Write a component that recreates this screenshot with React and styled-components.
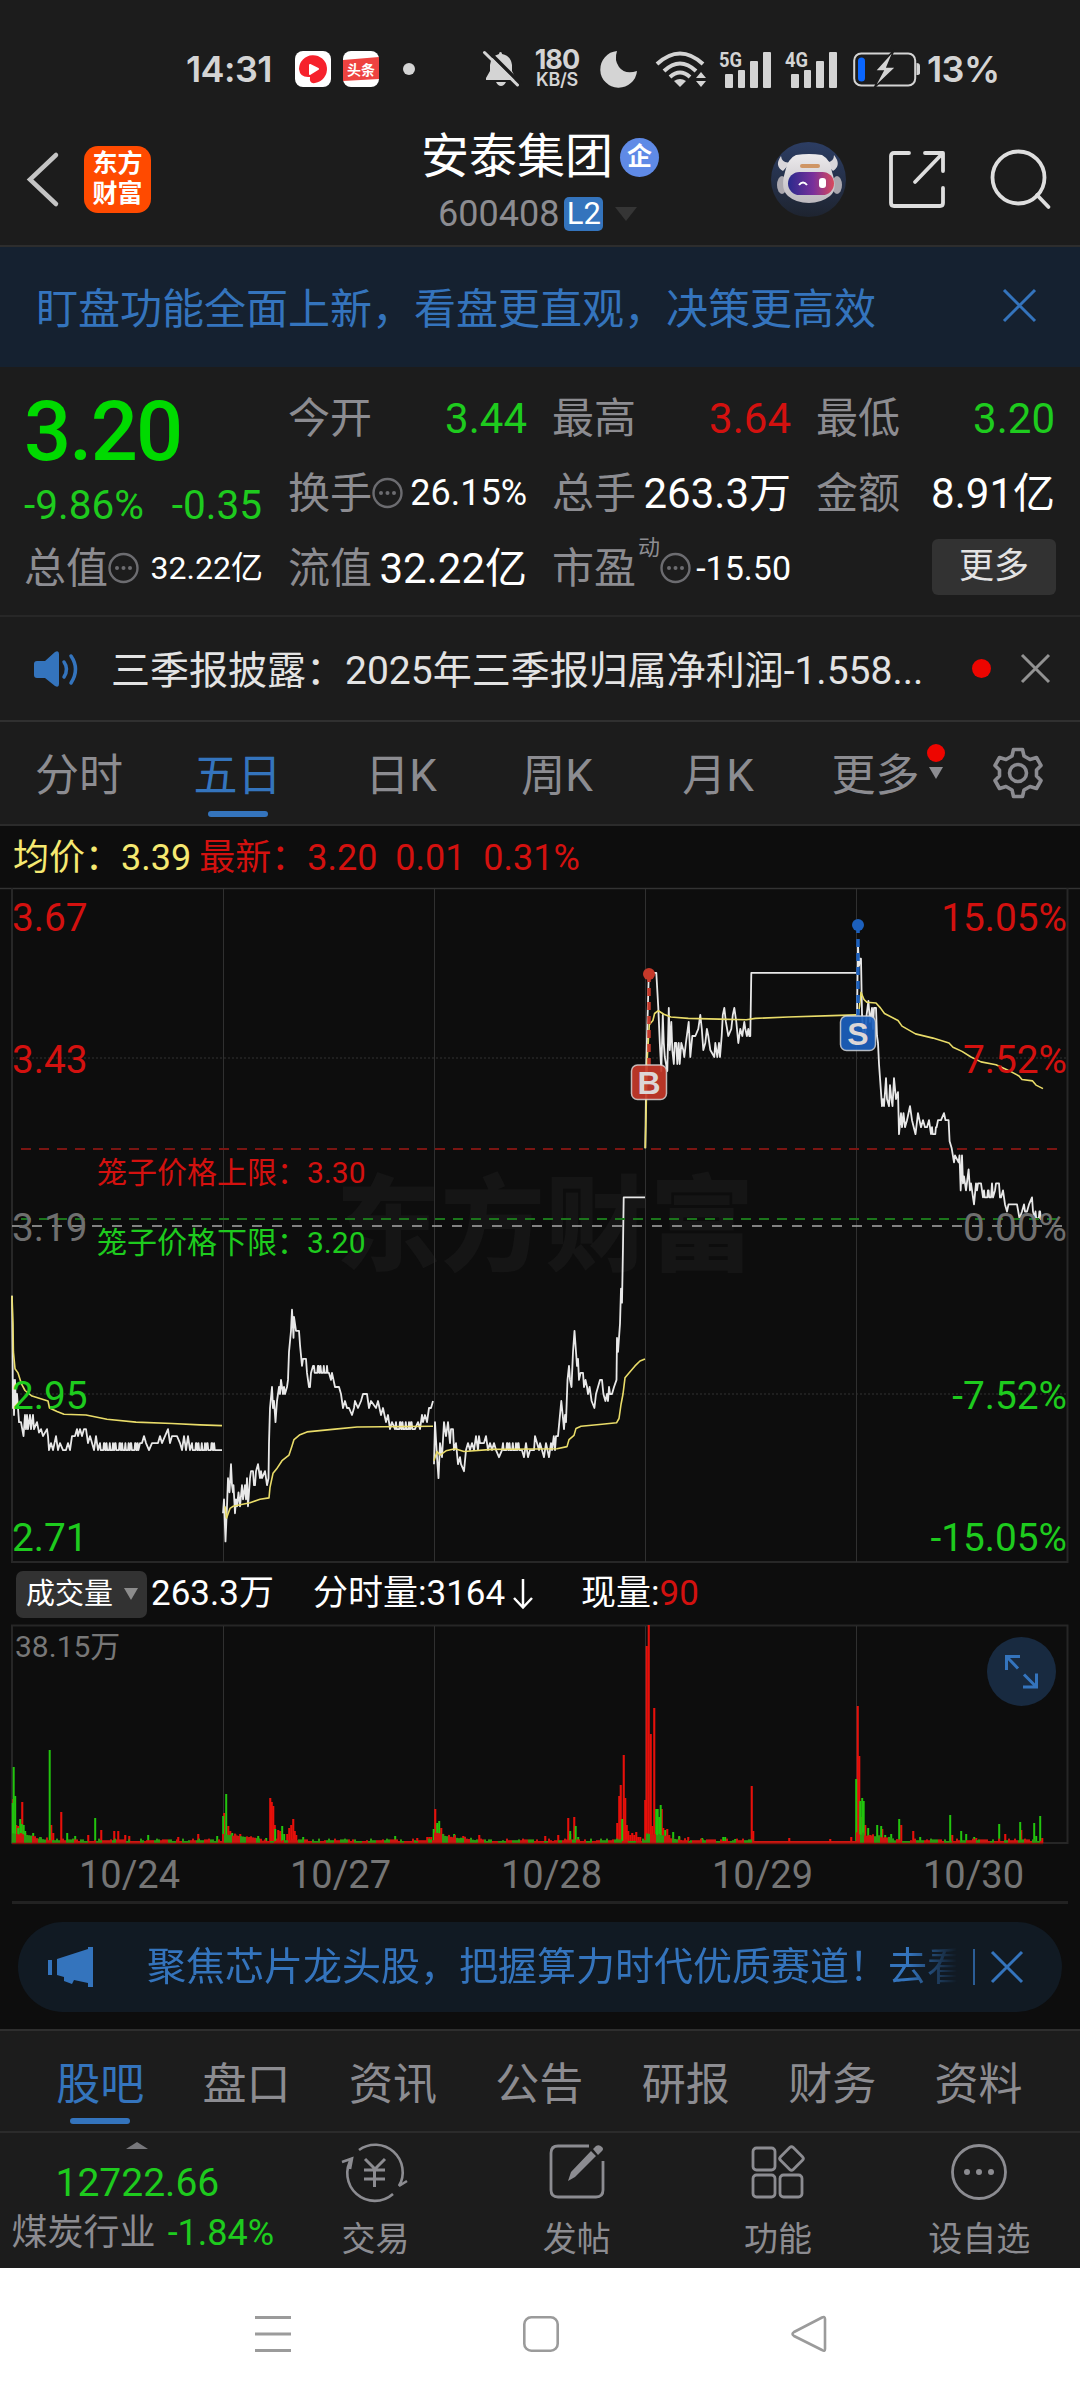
import React from 'react'
import styled, { createGlobalStyle } from 'styled-components'

const GlobalStyle = createGlobalStyle`
	* {
		box-sizing: border-box;
	}
	body {
		margin: 0;
		background: #1c1c1c;
		font-family: Roboto, 'Noto Sans CJK SC', sans-serif;
		color: #e6e6e6;
	}
	svg {
		display: block;
		flex: none;
		overflow: visible;
	}
`

const RED = '#d3110f'
const GREEN = '#1ecb1e'
const BLUE = '#3474bd'
const GREY = '#8c8c91'

const Page = styled.main`
	width: 1080px;
	height: 2400px;
	display: flex;
	flex-direction: column;
	overflow: hidden;
	white-space: nowrap;
`

/* status bar */

const StatusBar = styled.div`
	height: 138px;
	display: flex;
	align-items: center;
	padding-left: 186px;
	color: #d4d4d4;
`

const Slot = styled.div`
	width: ${p => p.$w}px;
	margin: ${p => p.$top || 0}px ${p => p.$gap || 0}px 0 ${p => p.$left || 0}px;
	flex: none;
`

const Clock = styled.span`
	font: 600 36px/40px Inter, sans-serif;
	letter-spacing: -0.6px;
`

const Speed = styled.div`
	display: flex;
	flex-direction: column;
	align-items: center;
	font: 700 27px/22px Inter, sans-serif;
	letter-spacing: -0.9px;

	small {
		font-size: 18px;
		line-height: 18px;
		letter-spacing: -0.3px;
		font-weight: 600;
	}
`

/* header */

const Header = styled.header`
	height: 109px;
	display: flex;
	align-items: flex-start;
	padding-left: 26px;
	border-bottom: 2px solid #2d2d2d;
`

const Logo = styled.div`
	width: 67px;
	height: 67px;
	margin: 8px 0 0 25px;
	padding-top: 3px;
	border-radius: 14px;
	background: #ff4a00;
	color: #fff;
	text-align: center;
	font-weight: 700;
	font-size: 25px;
	line-height: 30px;
	white-space: normal;
`

const Title = styled.div`
	width: 300px;
	margin-left: 240px;
	padding-left: 30px;
`

const NameRow = styled.div`
	height: 56px;
	margin-top: -9px;
	display: flex;
	align-items: center;
	gap: 7px;
	font-size: 48px;
	line-height: 56px;
	color: #fff;
`

const CompanyBadge = styled.span`
	width: 39px;
	height: 39px;
	border-radius: 50%;
	background: #5f8ae6;
	font-size: 25px;
	font-weight: 700;
	line-height: 38px;
	text-align: center;
`

const CodeRow = styled.div`
	height: 36px;
	margin-top: 11px;
	padding-left: 17px;
	display: flex;
	align-items: center;
	font-size: 36px;
	color: ${GREY};
`

const LevelBadge = styled.span`
	width: 39px;
	height: 34px;
	margin: 0 12px 0 5px;
	border-radius: 5px;
	background: ${BLUE};
	color: #fff;
	font-size: 31px;
	line-height: 34px;
	text-align: center;
`

const Arrow = styled.i`
	width: 0;
	height: 0;
	border: ${p => p.$half}px solid transparent;
	border-bottom-width: 0;
	border-top: ${p => p.$h}px solid ${p => p.$color};
`

/* banner and stats */

const Banner = styled.div`
	height: 120px;
	display: flex;
	align-items: center;
	justify-content: space-between;
	padding: 0 44px 3px 36px;
	background: #152130;
	color: ${BLUE};
	font-size: 42px;
`

const Stats = styled.section`
	height: 250px;
	padding: 14px 0 0 24px;
	display: grid;
	grid-template-columns: repeat(4, 238px);
	grid-template-rows: repeat(3, 75px);
	column-gap: 26px;
	border-bottom: 2px solid #272727;
`

const Quote = styled.div`
	grid-row: span 2;
	margin-top: 13px;
	color: ${GREEN};
`

const Price = styled.div`
	font-size: 83px;
	line-height: 75px;
	font-weight: 500;
	letter-spacing: -1.8px;
	color: #00da00;
`

const Change = styled.div`
	display: flex;
	justify-content: space-between;
	font-size: 40.5px;
	line-height: 73px;
`

const Stat = styled.div`
	display: flex;
	align-items: center;
	justify-content: space-between;
	color: ${GREY};
	font-size: 42px;
	line-height: 75px;
`

const StatLabel = styled.span`
	display: flex;
	align-items: center;

	sup {
		align-self: flex-start;
		margin-left: 2px;
		font-size: 22px;
		line-height: 34px;
	}
`

const StatValue = styled.span`
	margin-right: -1px;
	font-size: ${p => p.$size || 42}px;
	color: ${p => p.$color || '#fff'};
`

const MoreButton = styled.button`
	width: 124px;
	height: 56px;
	margin: 8px 0 0 116px;
	padding: 0;
	border: 0;
	border-radius: 6px;
	background: #323232;
	color: #e3e3e3;
	font: 35px/54px Roboto, 'Noto Sans CJK SC', sans-serif;
`

const News = styled.div`
	height: 105px;
	display: flex;
	align-items: center;
	padding-left: 33px;
	border-bottom: 2px solid #303030;
	font-size: 39px;
	color: #e3e3e3;
`

const NewsText = styled.span`
	width: 861px;
	margin-left: 32px;
	padding-bottom: 4px;
`

const Dot = styled.i`
	width: ${p => p.$size}px;
	height: ${p => p.$size}px;
	border-radius: 50%;
	background: ${p => p.$color};
`

/* tabs */

const Tabs = styled.nav`
	height: 104px;
	padding-left: ${p => p.$pad || 0}px;
	display: flex;
	border-top: ${p => (p.$topLine ? '2px solid #2e2e2e' : 0)};
	border-bottom: 2px solid #2b2b2b;
`

const Tab = styled.div`
	position: relative;
	width: ${p => p.$w}px;
	text-align: center;
	font-size: 44px;
	line-height: 108px;
	color: ${p => (p.$active ? BLUE : GREY)};

	&::after {
		content: '';
		display: ${p => (p.$active ? 'block' : 'none')};
		position: absolute;
		left: calc(50% - 30px);
		bottom: 7px;
		width: 60px;
		height: 6px;
		border-radius: 3px;
		background: ${BLUE};
	}
`

const TabMark = styled.span`
	position: absolute;
	left: 120px;
	top: 22px;
	display: flex;
	flex-direction: column;
	align-items: center;
	gap: 5px;
`

const GearBox = styled.div`
	margin: 25px 0 0 48px;
`

/* chart */

const ChartPanel = styled.section`
	height: 1203px;
	background: #0d0d0d;
`

const Summary = styled.div`
	height: 62px;
	padding-left: 13px;
	display: flex;
	gap: 8px;
	font-size: 36px;
	line-height: 64px;
	color: ${p => p.$color};
	white-space: pre;
`

const Tint = styled.span`
	color: ${p => p.$color};
`

const VolumeBar = styled.div`
	height: 62px;
	display: flex;
	align-items: center;
	padding-left: 16px;
	font-size: 35px;
	line-height: 60px;
	color: #fff;
`

const VolumePill = styled.div`
	width: 131px;
	height: 47px;
	margin-right: 4px;
	padding-left: 10px;
	display: flex;
	align-items: center;
	gap: 11px;
	border-radius: 7px;
	background: #323232;
	font-size: 29px;
	line-height: 46px;
`

const VolumeItem = styled.span`
	width: ${p => p.$w}px;
	display: flex;
	align-items: center;
	gap: 6px;
`

const Dates = styled.div`
	height: 59px;
	margin: 0 12px;
	padding-left: 12px;
	display: grid;
	grid-template-columns: repeat(5, 211px);
	border-bottom: 3px solid #222;
	font-size: 38px;
	line-height: 60px;
	text-align: center;
	color: #757575;
`

const Promo = styled.div`
	height: 90px;
	margin: 18px 18px 0;
	padding-left: 30px;
	display: flex;
	align-items: center;
	border-radius: 45px;
	background: #111a23;
	color: ${BLUE};
	font-size: 39px;
	line-height: 88px;
`

const PromoText = styled.span`
	width: 810px;
	margin-left: 52px;
	overflow: hidden;
	mask-image: linear-gradient(90deg, #000 94%, transparent 100%);
`

const Divider = styled.i`
	width: 2px;
	height: 36px;
	margin: 0 16px 0 16px;
	background: #2b5d96;
`

/* bottom */

const Toolbar = styled.footer`
	height: 135px;
	display: flex;
	color: ${GREY};
`

const Sector = styled.div`
	width: 275px;
	display: flex;
	flex-direction: column;
	align-items: center;
	padding-top: 9px;
`

const SectorIndex = styled.div`
	margin-top: 9px;
	font-size: 39px;
	line-height: 50px;
	color: ${GREEN};
`

const SectorRow = styled.div`
	display: flex;
	gap: 12px;
	margin-left: 11px;
	font-size: 36px;
	line-height: 50px;
`

const ToolItem = styled.div`
	width: 201.5px;
	padding-top: 10px;
	display: flex;
	flex-direction: column;
	align-items: center;
	gap: 18px;
	font-size: 34px;
	line-height: 40px;
`

const SystemNav = styled.div`
	flex: 1;
	display: flex;
	justify-content: center;
	gap: 232px;
	padding: 48px 0 0 1px;
	background: #fff;
`

/* icons */

const Cross = ({ size, color, width = 3 }) => (
	<svg width={size} height={size} viewBox={`0 0 ${size} ${size}`} stroke={color} strokeWidth={width}>
		<path d={`M1 1L${size - 1} ${size - 1}M${size - 1} 1L1 ${size - 1}`} />
	</svg>
)

const Signal = ({ label }) => (
	<svg width="54" height="38" viewBox="0 0 54 38" fill="#d4d4d4">
		<text x="0" y="16.5" fontSize="21" fontWeight="700" fontFamily="Roboto" textLength="23" lengthAdjust="spacingAndGlyphs">
			{label}
		</text>
		<rect x="6" y="24" width="8" height="14" rx="1" />
		<rect x="19" y="20" width="7" height="18" rx="1" />
		<rect x="31" y="11" width="8" height="27" rx="1" />
		<rect x="44" y="2" width="8" height="36" rx="1" />
	</svg>
)

const InfoMark = () => (
	<svg width="31" height="31" viewBox="0 0 31 31" fill="#6c6c70">
		<circle cx="15.5" cy="15" r="14" fill="none" stroke="#6c6c70" strokeWidth="2.4" />
		<circle cx="9" cy="15" r="2" />
		<circle cx="15.5" cy="15" r="2" />
		<circle cx="22" cy="15" r="2" />
	</svg>
)

const Robot = () => (
	<svg width="75" height="75" viewBox="0 0 75 75">
		<defs>
			<linearGradient id="sky" x2="0" y2="1">
				<stop stopColor="#2c3d63" />
				<stop offset="1" stopColor="#1e2430" />
			</linearGradient>
			<linearGradient id="visor">
				<stop stopColor="#2a2a8c" />
				<stop offset="0.55" stopColor="#79309b" />
				<stop offset="1" stopColor="#d84a5c" />
			</linearGradient>
			<linearGradient id="shell" x2="0" y2="1">
				<stop stopColor="#eceaec" />
				<stop offset="1" stopColor="#bdb9bf" />
			</linearGradient>
		</defs>
		<circle cx="37.5" cy="37.5" r="37.5" fill="url(#sky)" />
		<path d="M10 14Q3 24 12 29L20 20Q11 22 10 14ZM63 13Q71 23 62 29L54 20Q63 21 63 13Z" fill="#d9d6da" />
		<ellipse cx="11" cy="43" rx="5" ry="9" fill="#aaa7ae" />
		<ellipse cx="66" cy="43" rx="5" ry="9" fill="#aaa7ae" />
		<path d="M25 13Q38 11 51 13Q60 18 61 30Q67 48 59 54Q50 61 38 61Q25 61 17 54Q9 47 14 30Q17 16 25 13Z" fill="url(#shell)" />
		<rect x="17" y="30" width="46" height="23" rx="11.5" fill="url(#visor)" />
		<rect x="29" y="22" width="20" height="4" rx="2" fill="#cf9565" />
		<path d="M28 43Q32 38 36 43" fill="none" stroke="#fff" strokeWidth="2" />
		<rect x="48" y="36" width="7" height="10" rx="3" fill="#fff" />
	</svg>
)

/* x is an offset in the day, price is in cents */
const chop = (from, to, low, high) => {
	const out = []
	for (let x = from, i = 0; x <= to; x += 1.3, i++) {
		out.push([x, (i * 7 + (i >> 2)) % 3 === 0 ? high : low])
		out.push([x + 0.7, i % 4 === 3 ? high : low])
	}
	return out
}

const pts = text => text.split(' ').map(p => p.split(':').map(Number))

const DAYS = [12, 223, 434, 645.3, 857]

const PRICES = [
	[
		...pts('0:309 0.6:300 1:293 1.5:297 2:292 3:297 4:293 5:295 6:293 7:291 9:291 11.5:289 13:292 14:290 15:292 16:290 18:292 19:290 21:292 22:290 25:291 27:289.5 29:290 31:289 35:290 36:289 37:287 39:288 41:287 44:289 46:287 48:288 51:287 54:287 56:288 58:287 60:289 63:289 65:290 66:289 68:290 70:289 72:290 74:290 76:288 78:289 80:288 82:287 84:289 86:287'),
		...chop(88, 126, 287, 288),
		...pts('128:288 130:288 132:289 134:288 137:287 140:288 146:288 148:289 150:288 153:289 156:290 158:288 160:289 165:289 168:288 170:287 172:289 174:287 176:289 178:287'),
		...chop(180, 204, 287, 288),
		...pts('206:287 210:287')
	],
	[
		...pts('0:278 1:280 2.5:274 4:279 5:283 6.5:281 8:285 9:282 10:281 10.5:282 12:278 13:280 14:279 15.5:281 17:279 19:282 20:280 21:281 22:282 23:280 24:283 25:279 27:283 28:284 30:284 31:282 32:282 33:284 35:285 37:283 38:284 39:283 42:284 44:282 45.5:283 46:288 47:293 49:296 50:293 51:294 52.5:291 54:294 56:296 57:295 58:297 60:295 61:296 62:295 64:296 65:297 66:301 68:304 69:307 70.5:303 71:306 73:304 76:304 77:302 79:299 80:300 83:300 84:298 86:296 87:296 88:298 90:299'),
		...chop(91, 104, 298, 299),
		...pts('106:298 108:297 109:298 112:296 116:296 118:295 120:293 122:294 124:293 126:293 129:292 131:293 132:294 135:293 138:294 140:295 144:295 146:293 148:294 153:293 155:294 158:292 160:293 163:291 165:292 167:290 169:291 172:290'),
		...chop(173, 192, 290, 291),
		...pts('195:291 197:290 199:292 200:291 202:292 204:291 206:293 208:293 210:294')
	],
	[
		...pts('0:285 1:291 3:286 4.5:283 6:288 7:287 8:286 10:291 12:289 14:291 16:288 17:290 19:290 20:287 22:288 24:285 26:286 27:285 30:284 32:287 34:288 36:287 38:288 40:287 42:289 44:287 45:289 46:288 50:288 52:289 54:287 56:288 58:287 60:288 62:287 65:286 68:287'),
		...chop(69, 88, 287, 288),
		...pts('90:286 92:288 94:286 96:287 100:287 101:289 103:288 105:287 106:288 110:286 112:288 115:286'),
		...pts('117:288 118:287 119.8:289 121:287 122:289 124:289 127.3:294 128.7:292 130:290 131:292 132:291 133.5:297 135:299 136:297 137.5:296 139:301 140.5:304 142:301 143:299 144:300 145:297 146.6:298 149:298 150:296 151.5:297 153:296 154:295 155.6:296 157.6:294 160.4:293 162:295 164:296 166:297 168:297 169.4:295 171.4:294 173:295 174:294 175:296 176:295 178:295 180:296 182.5:297 183:303 184:301 186:305 187:310 188:308 189:316 189.7:323 211:323')
	],
	pts('0:330 1:342 3.5:355 11:355 13:350 14.5:345 16:341 17.5:349 18.5:345 19.5:343 22:341 23.5:350 24.5:344 26:348 27:344 28.5:342 29.5:345 31:345 32:342 33.4:345 34.4:342 36:345 38:344 39:343 40.6:345 43.4:348 45:343 47:346 50:346 53:347 55:349 56.5:347 58:344 60:345 61.6:347 63:346 65:344 69:343 70:345 72:343 73.7:345 74.7:343 76.4:346 77.5:349 79:350 80.6:348 83:346 86:347 87.5:349 89:350 91:348 93:345 95:347 97:346 99:348 100:347 101.6:346 103:347 104:346 105:346 106:355 211:355'),
	[
		...pts('0:349 1:359 2:356 3:357 4:357 5:349 6:347 7.6:345 9.6:349 11.4:351 13:348 15:350 16:347 17:350 19:350 20:346 21:345 22:342 24:338 25:336 26:337 27:336 29:340 30:337 32:336 33:339 34.4:337 35.5:336 37:340 39:337 41:338 42:332 44:335 45:333 46.5:335 48:333 50:334 53:336 55:334 58.5:332 61:335 64:333 66:334 68:333 70:333 72:334 74:332'),
		...chop(75, 80, 332, 333),
		...pts('81:334 84:334 87:335 88.5:334 91.6:334 92.6:331 94.7:330 97:328 98:329 101.6:328 102.5:329 103.7:324 105:329 106:325 107:326 109:324 111.6:327 113:324 114:325 115:324 117:322 119:325 120:324 121:325 124:325 126:323'),
		...chop(127, 133, 323, 324),
		...pts('134:323 135:325 136:323 138:324 139:325 142:325 143:323 144:323 146:324 148:322 150:321 151.5:322 160:322 162.5:320 165:321 167:322 168:321 170:321 172:322 175:323 176:321 178:320'),
		...chop(178.5, 182.5, 320, 321),
		...pts('184:319.8')
	]
]

const AVERAGES = [
	'0:309 1:305 1.4:301 3:298.6 6:298 9.6:296.4 13:295.5 20:294.7 36:294 37.5:293 45:292.5 52:292.1 74:292 95:291.4 124:291 160:290.8 188:290.6 210:290.5',
	'2:279 3.5:277.3 7:278.7 10:279 27:279.5 37:280 46:280.2 47:281.7 50:283.7 53.5:284.3 59:285.5 66:286.3 69:287.6 71:288.5 77:289.2 84:289.6 112:290 134:290.3 210:290.4',
	'0:285.5 3:286.8 6:286.3 12:286.9 21:287.2 30:286.8 58:287.1 123:287.2 133:287.5 135:288.5 140:289.1 142:290.1 147:290.4 168:290.7 182.5:290.9 185:291.5 187:293.5 189:295 191:297.3 195:298 201:299 206:299.7 211:300',
	'0:330 2:343 4:347.6 7.6:348.2 9.3:349.2 13:349.6 18.6:349.1 25.5:348.7 43:348.5 74:348.4 101:348.3 110:348.5 143:348.7 187:348.9 211:349',
	'1.7:349.2 4:352.2 7:351.2 10:350.8 19:350.7 23.4:350 27.5:349.2 41:348.2 45:347.4 58.5:346.3 76:345.7 92:345 96:344.4 105:343.8 114:343 124:342.3 139:341.9 151.5:341.1 162:340.3 165:339.8 175.6:339.6 179:339 186:338.5'
].map(pts)

const toLine = (points, day) => points.map(([x, p]) => `${(DAYS[day] + x).toFixed(1)},${(337.5 - (p - 319) * 7.02).toFixed(1)}`).join(' ')

const AXIS = [
	['3.67', '15.05%', 43, RED],
	['3.43', '7.52%', 184.5, RED],
	['3.19', '0.00%', 352.5, '#6f6f6f'],
	['2.95', '-7.52%', 521, GREEN],
	['2.71', '-15.05%', 663, GREEN]
]

const TradeMark = ({ x, dotY, y, letter, color }) => (
	<g>
		<path d={`M${x} ${dotY}V${y}`} stroke={color} strokeWidth="3.5" strokeDasharray="8 6" />
		<circle cx={x} cy={dotY} r="6" fill={color} />
		<rect x={x - 17.5} y={y} width="35" height="34.5" rx="6" fill={color} fillOpacity="0.93" stroke="#ddd" strokeOpacity="0.8" strokeWidth="1.5" />
		<text x={x} y={y + 28.5} fontSize="32" fontWeight="700" fontFamily="Liberation Sans" textAnchor="middle" fill="#dcd6d6">
			{letter}
		</text>
	</g>
)

const PriceChart = () => (
	<svg width="1080" height="675" viewBox="0 0 1080 675" fontSize="38.8" fill="none">
		<text x="336" y="375" fontSize="104" fontWeight="900" fontFamily="Noto Sans CJK SC" fill="#151515" textLength="418">
			东方财富
		</text>
		<path d="M0 0.5H1080" stroke="#333" strokeWidth="1.5" />
		<path d="M12 170H1067M12 506H1067" stroke="#262626" strokeWidth="1.5" strokeDasharray="2 2" />
		<path d="M12 0V674H1067.5V0" stroke="#272727" strokeWidth="2" />
		<path d="M223.5 1V674M434.5 1V674M645.5 1V674M856.5 1V674" stroke="#303030" />
		<path d="M21 261H1058" stroke="#7a1512" strokeWidth="2" strokeDasharray="10 8" />
		<path d="M12 338H1062" stroke="#a8a8a8" strokeWidth="1.5" strokeDasharray="10 10" />
		<g strokeLinejoin="round">
			{PRICES.map((day, i) => <polyline key={i} points={toLine(day, i)} stroke="#e8e8e8" strokeWidth="1.8" />)}
			{AVERAGES.map((day, i) => <polyline key={i} points={toLine(day, i)} stroke="#e9dc69" strokeWidth="1.6" />)}
		</g>
		<path d="M21 331H1058" stroke="#1b761b" strokeWidth="2" strokeDasharray="10 8" />
		{AXIS.map(([price, percent, y, color]) => (
			<g key={price} fill={color}>
				<text x="12" y={y}>{price}</text>
				<text x="1067" y={y} textAnchor="end">{percent}</text>
			</g>
		))}
		<g fontSize="30">
			<text x="97" y="295" fill={RED}>笼子价格上限：3.30</text>
			<text x="97" y="365" fill={GREEN}>笼子价格下限：3.20</text>
		</g>
		<TradeMark x={649} dotY={86} y={177} letter="B" color="#c5392a" />
		<TradeMark x={858} dotY={37} y={128} letter="S" color="#1c60bd" />
	</svg>
)

/* x:height of the tall bars, red and green */
const SPIKES = {
	r: '13:44 16:18 18:17 22:41 25:10 51:18 53:10 61:31 88:8 101:13 114:12 118:12 125:8 129:7 178:6 198:9 224:30 228:17 230:12 235:9 240:9 249:6 270:45 271.5:41 273:37 274.5:18 278:13 280:12 282:9 287:9 289:15 291:18 293:24 294.5:12 296:8 417:5 427:6 429:6 431:6 435:34 437:18 441:15 443:9 448:6 463:7 479:8 545:7 558:8 568:25 570:9 574:26 617:20 619:47 620.5:58 623.5:88 625:45 626.5:18 628:12 630:8 632:10 634:8 636:11 638:6 640:6 645:43 646.5:197 648.5:218 650.5:109 652:17 654:135 661.5:34 663:15 667:14 669:8 679:6 688:6 751.5:57 753:12 789:5 830:4 851:6 857.5:137 859:87 861:26 865:18 870:8 882:14 901:18 913:12 952:8 976:5 1005:9 1021:13 1042:5',
	g: '12.5:40 13.5:76 15:47 18:15 20:24 21.5:19 23.5:18 25:12 33:10 40:6 49.5:93 67:10 75:7 95:25 148:8 217:7 223:27 226:49 232:10 235:8 258:7 266:5 275:14 282:17 284:9 303:6 395:7 433.5:14 437:20 439:22 454:9 570:12 575.5:17 578:6 622:24 656:34 657.5:34 659:26 660.5:38 665:13 673:11 679:7 702:5 723:6 725:6 735:4 856:64 860:42 862:45 863.5:42 868:15 877:18 881:17 885:8 891:9 899:24 920:6 950:28 961:12 966:9 974:6 999:19 1020:21 1034:20 1036:7 1040:27'
}

const noise = []
for (let x = 13; x < 1043; x += 2) {
	const quiet = x > 754 && x < 856
	const day = DAYS.filter(d => d <= x).pop()
	const roll = (x * 37 + (x >> 3) * 53) % 17
	const h = quiet ? 2 : 2 + (roll > 14 ? 3 : roll % 3) * 0.8 + Math.max(0, 7 - (x - day) / 6)
	noise.push([x, h, !quiet && (x * 13 + (x >> 4) * 7) % 9 > 4 ? '#2d9c12' : '#cf1710'])
}

const VolumeChart = () => (
	<svg width="1080" height="220" viewBox="0 0 1080 220" fill="none">
		<path d="M12 218V0.5H1067.5V218Z" stroke="#262626" strokeWidth="2" />
		<path d="M223.5 1V218M434.5 1V218M645.5 1V218M856.5 1V218" stroke="#303030" />
		<text x="15" y="32" fontSize="30" fill="#777">38.15万</text>
		{pts(SPIKES.r).map(([x, h]) => (
			<rect key={x} x={x - 0.8} y={218 - h} width="2.1" height={h} fill="#e6100a" />
		))}
		{pts(SPIKES.g).map(([x, h]) => (
			<rect key={x} x={x - 0.8} y={218 - h} width="2" height={h} fill="#22c40e" />
		))}
		{noise.map(([x, h, color]) => (
			<rect key={x} x={x - 1} y={218 - h} width="2" height={h} fill={color} />
		))}
		<path d="M12 218.5H1043" stroke="#7d100c" strokeWidth="1.5" />
		<circle cx="1021.5" cy="46.5" r="34.5" fill="#182a40" />
		<path d="M1020 31.5H1006.5V45M1007 32L1018 43.5M1024 49.5L1036 61.5M1023 62H1036.5V48.5" stroke="#3474bd" strokeWidth="3" />
	</svg>
)

const TABS = [
	['分时', 158],
	['五日', 159],
	['日K', 168],
	['周K', 144],
	['月K', 178]
]

export default function App() {
	return (
		<Page>
			<GlobalStyle />
			<StatusBar>
				<Slot $w={109}>
					<Clock>14:31</Clock>
				</Slot>
				<Slot $w={36} $gap={12}>
					<svg width="36" height="36" viewBox="0 0 36 36">
						<rect width="36" height="36" rx="8" fill="#fff" />
						<path d="M4 18A14 14 0 1 1 20 32Q14 33 15 26Q5 27 4 18Z" fill="#f6222c" />
						<path d="M15 14L23 18L15 23Z" fill="#fff" stroke="#fff" strokeWidth="2" strokeLinejoin="round" />
					</svg>
				</Slot>
				<Slot $w={36} $gap={24}>
					<svg width="36" height="36" viewBox="0 0 36 36">
						<rect width="36" height="36" rx="8" fill="#fff" />
						<path d="M0 9L36 6V28L0 30Z" fill="#ee4340" />
						<text x="18" y="23.5" fontSize="14" fontWeight="700" fill="#fff" textAnchor="middle">头条</text>
					</svg>
				</Slot>
				<Slot $w={12} $gap={68}>
					<Dot as="div" $size={12} $color="#d4d4d4" />
				</Slot>
				<Slot $w={36} $gap={14}>
					<svg width="36" height="36" viewBox="0 0 36 36">
						<path d="M17.5 1Q19 1 19 3Q28 5 29 14V20L33 28V29H3V27L7 20V14Q8 5 16 3Q16 1 17.5 1Z" fill="#d4d4d4" />
						<path d="M13 31H23Q21 35 18 35Q15 35 13 31Z" fill="#d4d4d4" />
						<path d="M4 -1L38 33" stroke="#1c1c1c" strokeWidth="3.5" />
						<path d="M1.5 1.5L34.5 34" stroke="#d4d4d4" strokeWidth="3" strokeLinecap="round" />
					</svg>
				</Slot>
				<Slot $w={48} $gap={19}>
					<Speed>
						180<small>KB/S</small>
					</Speed>
				</Slot>
				<Slot $w={37} $gap={18}>
					<svg width="37" height="37" viewBox="0 0 37 37">
						<path d="M17 0A18.400 18.400 0 1 0 37 20Q25 24 19 16Q14 9 17 0Z" fill="#d4d4d4" />
					</svg>
				</Slot>
				<Slot $w={52} $gap={12}>
					<svg width="52" height="37" viewBox="0 0 52 37" fill="none" stroke="#d4d4d4" strokeWidth="4">
						<path d="M2 13Q25 -8 48 13M9 20Q25 5 41 20M15 26Q25 17 35 26" />
						<path d="M19 30Q25 26 31 30L25 36Z" fill="#d4d4d4" stroke="none" />
						<path d="M41 27L46 21L51 27ZM41 30L46 36L51 30Z" fill="#d4d4d4" stroke="none" />
					</svg>
				</Slot>
				<Slot $w={54} $gap={12}>
					<Signal label="5G" />
				</Slot>
				<Slot $w={54} $gap={14}>
					<Signal label="4G" />
				</Slot>
				<Slot $w={68} $gap={6}>
					<svg width="68" height="38" viewBox="0 0 68 38">
						<rect x="1.2" y="3.5" width="61" height="32" rx="7" fill="none" stroke="#d4d4d4" strokeWidth="2" />
						<path d="M63.5 13Q67 13 67 16V23Q67 25 63.5 25Z" fill="#d4d4d4" />
						<rect x="5" y="7.5" width="7" height="24" rx="3.5" fill="#0a66ff" />
						<path d="M41 0L22 21H30L21 38L43 17H34Z" fill="#d4d4d4" stroke="#1c1c1c" strokeWidth="1.5" />
					</svg>
				</Slot>
				<Clock>13%</Clock>
			</StatusBar>

			<Header>
				<svg width="33" height="83" viewBox="0 0 33 83" fill="none" stroke="#c4c4c4" strokeWidth="4.5" strokeLinecap="round">
					<path d="M30 17L4 41.5L30 66" />
				</svg>
				<Logo>
					东方
					<br />
					财富
				</Logo>
				<Title>
					<NameRow>
						安泰集团<CompanyBadge>企</CompanyBadge>
					</NameRow>
					<CodeRow>
						600408<LevelBadge>L2</LevelBadge>
						<Arrow $half={11} $h={14} $color="#353535" />
					</CodeRow>
				</Title>
				<Slot $w={75} $gap={42} $top={4} $left={80}>
					<Robot />
				</Slot>
				<Slot $w={58} $gap={44} $top={12}>
					<svg width="58" height="59" viewBox="0 0 58 59" fill="none" stroke="#dedede" strokeWidth="3.8" strokeLinecap="round" strokeLinejoin="round">
						<path d="M21 3H6Q3 3 3 6V53Q3 56 6 56H52Q55 56 55 53V38M37 3H55V21M54 4L27 32" />
					</svg>
				</Slot>
				<Slot $w={62} $top={11}>
					<svg width="62" height="62" viewBox="0 0 62 62" fill="none" stroke="#dedede" strokeWidth="3.8" strokeLinecap="round">
						<circle cx="28.5" cy="28.5" r="26" />
						<path d="M47 46L58.5 58" />
					</svg>
				</Slot>
			</Header>

			<Banner>
				盯盘功能全面上新，看盘更直观，决策更高效
				<Cross size={33} color={BLUE} />
			</Banner>

			<Stats>
				<Quote>
					<Price>3.20</Price>
					<Change>
						<span>-9.86%</span>
						<span>-0.35</span>
					</Change>
				</Quote>
				<Stat>
					今开<StatValue $color={GREEN}>3.44</StatValue>
				</Stat>
				<Stat>
					最高<StatValue $color={RED}>3.64</StatValue>
				</Stat>
				<Stat>
					最低<StatValue $color={GREEN}>3.20</StatValue>
				</Stat>
				<Stat>
					<StatLabel>换手<InfoMark /></StatLabel>
					<StatValue $size={36}>26.15%</StatValue>
				</Stat>
				<Stat>
					总手<StatValue>263.3万</StatValue>
				</Stat>
				<Stat>
					金额<StatValue>8.91亿</StatValue>
				</Stat>
				<Stat>
					<StatLabel>总值<InfoMark /></StatLabel>
					<StatValue $size={32}>32.22亿</StatValue>
				</Stat>
				<Stat>
					流值<StatValue>32.22亿</StatValue>
				</Stat>
				<Stat>
					<StatLabel>市盈<sup>动</sup><InfoMark /></StatLabel>
					<StatValue $size={34}>-15.50</StatValue>
				</Stat>
				<MoreButton>更多</MoreButton>
			</Stats>

			<News>
				<svg width="46" height="38" viewBox="0 0 46 38" fill={BLUE}>
					<path d="M4 11H12L22 2Q26 0 26 4V34Q26 38 22 36L12 28H4Q1 28 1 25V14Q1 11 4 11Z" />
					<path d="M31 12Q36 19 31 27M38 6Q47 19 38 33" fill="none" stroke={BLUE} strokeWidth="3.5" strokeLinecap="round" />
				</svg>
				<NewsText>三季报披露：2025年三季报归属净利润-1.558...</NewsText>
				<Dot $size={19} $color="#ee0500" />
				<Slot $w={29} $left={30}>
					<Cross size={29} color="#929292" />
				</Slot>
			</News>

			<Tabs>
				{TABS.map(([label, w]) => (
					<Tab key={label} $w={w} $active={label === '五日'}>
						{label}
					</Tab>
				))}
				<Tab $w={137}>
					更多
					<TabMark>
						<Dot $size={18} $color="#ee0500" />
						<Arrow $half={7.5} $h={12} $color={GREY} />
					</TabMark>
				</Tab>
				<GearBox>
					<svg width="52" height="52" viewBox="0 0 52 52" fill="none" stroke={GREY} strokeWidth="3.6" strokeLinejoin="round">
						<path d="M21.5 2.5H30.5L32 9L38 12.5L44.5 10.5L49 18.5L44.5 23V29L49 33.5L44.5 41.5L38 39.5L32 43L30.5 49.5H21.5L20 43L14 39.5L7.5 41.5L3 33.5L7.5 29V23L3 18.5L7.5 10.5L14 12.5L20 9Z" />
						<circle cx="26" cy="26" r="8.5" />
					</svg>
				</GearBox>
			</Tabs>

			<ChartPanel>
				<Summary $color="#f5e871">
					<span>均价：3.39</span>
					<Tint $color={RED}>最新：3.20  0.01  0.31%</Tint>
				</Summary>
				<PriceChart />
				<VolumeBar>
					<VolumePill>
						成交量
						<Arrow $half={7.5} $h={12} $color="#8c8c8c" />
					</VolumePill>
					<VolumeItem $w={162}>263.3万</VolumeItem>
					<VolumeItem $w={268}>
						分时量:3164
						<svg width="24" height="32" viewBox="0 0 24 32" fill="none" stroke="#fff" strokeWidth="2.5">
							<path d="M12 1V29M3 20L12 29.5L21 20" />
						</svg>
					</VolumeItem>
					<span>
						现量:<Tint $color={RED}>90</Tint>
					</span>
				</VolumeBar>
				<VolumeChart />
				<Dates>
					{['10/24', '10/27', '10/28', '10/29', '10/30'].map(d => (
						<span key={d}>{d}</span>
					))}
				</Dates>
				<Promo>
					<svg width="47" height="41" viewBox="0 0 47 41" fill={BLUE}>
						<path d="M0 13H4V28H0ZM9 12L40 2V0H45V40H40V36L26 33L24 37L16 34V30L9 28Z" />
					</svg>
					<PromoText>聚焦芯片龙头股，把握算力时代优质赛道！去看</PromoText>
					<Divider />
					<Cross size={32} color={BLUE} />
				</Promo>
			</ChartPanel>

			<Tabs $pad={27} $topLine>
				{['股吧', '盘口', '资讯', '公告', '研报', '财务', '资料'].map((label, i) => (
					<Tab key={label} $w={146.4} $active={i === 0}>
						{label}
					</Tab>
				))}
			</Tabs>

			<Toolbar>
				<Sector>
					<svg width="22" height="7" viewBox="0 0 22 7" fill="#77777b">
						<path d="M0 7L11 0L22 7Z" />
					</svg>
					<SectorIndex>12722.66</SectorIndex>
					<SectorRow>
						煤炭行业<Tint $color={GREEN}>-1.84%</Tint>
					</SectorRow>
				</Sector>
				<ToolItem>
					<svg width="66" height="58" viewBox="0 0 66 58" fill="none" stroke={GREY} strokeWidth="2.6">
						<path d="M17 7A27.500 27.500 0 0 1 57 43L65 38M10 15A27.500 27.500 0 0 0 51 51M0 19L10 15.500L8 26" />
						<path d="M23 16L33 26L43 16M22 27H43M22 36H43M32.500 26V44" strokeWidth="3" />
					</svg>
					交易
				</ToolItem>
				<ToolItem>
					<svg width="58" height="58" viewBox="0 0 58 58" fill="none" stroke={GREY} strokeWidth="2.8">
						<path d="M41 3H10Q3 3 3 10V47Q3 54 10 54H48Q55 54 55 47V18" />
						<path d="M20 38L23 29L43 8L48 13L27 34ZM45 6L48 3Q51 1 54 4Q56 6 54 8L50 12Z" fill={GREY} stroke="none" />
					</svg>
					发帖
				</ToolItem>
				<ToolItem>
					<svg width="58" height="58" viewBox="0 0 58 58" fill="none" stroke={GREY} strokeWidth="2.8">
						<rect x="4" y="5" width="22" height="22" rx="3.5" />
						<rect x="4" y="32" width="22" height="22" rx="3.5" />
						<rect x="31" y="32" width="22" height="22" rx="3.5" />
						<rect x="33.5" y="6.5" width="18" height="18" rx="2.5" transform="rotate(45 42.5 15.5)" />
					</svg>
					功能
				</ToolItem>
				<ToolItem>
					<svg width="58" height="58" viewBox="0 0 58 58" fill={GREY}>
						<circle cx="29" cy="29" r="26.5" fill="none" stroke={GREY} strokeWidth="2.8" />
						<circle cx="17" cy="29" r="3" />
						<circle cx="29" cy="29" r="3" />
						<circle cx="41" cy="29" r="3" />
					</svg>
					设自选
				</ToolItem>
			</Toolbar>

			<SystemNav>
				<svg width="36" height="36" viewBox="0 0 36 36" stroke="#9b9b9b" strokeWidth="3">
					<path d="M0 1.5H36M0 18H36M0 34.5H36" />
				</svg>
				<svg width="36" height="36" viewBox="0 0 36 36" fill="none" stroke="#9b9b9b" strokeWidth="2.6">
					<rect x="1.3" y="1.3" width="33.4" height="33.4" rx="7" />
				</svg>
				<svg width="36" height="36" viewBox="0 0 36 36" fill="none" stroke="#9b9b9b" strokeWidth="2.6" strokeLinejoin="round">
					<path d="M31 1.5Q34 0 34 3V33Q34 36 31 34L3 20Q0 18 3 16Z" />
				</svg>
			</SystemNav>
		</Page>
	)
}
